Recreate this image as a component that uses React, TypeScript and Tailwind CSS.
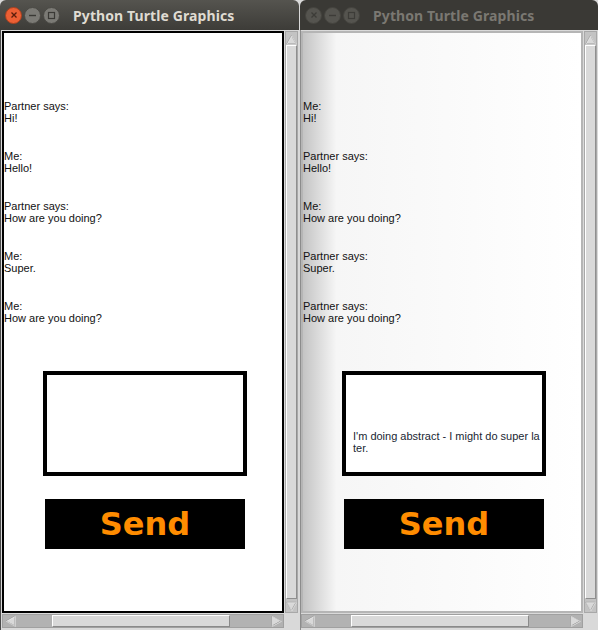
import React from 'react';

type Msg = { who: string; text: string };

const leftChat: Msg[] = [
  { who: 'Partner says:', text: 'Hi!' },
  { who: 'Me:', text: 'Hello!' },
  { who: 'Partner says:', text: 'How are you doing?' },
  { who: 'Me:', text: 'Super.' },
  { who: 'Me:', text: 'How are you doing?' }
];

const rightChat: Msg[] = [
  { who: 'Me:', text: 'Hi!' },
  { who: 'Partner says:', text: 'Hello!' },
  { who: 'Me:', text: 'How are you doing?' },
  { who: 'Partner says:', text: 'Super.' },
  { who: 'Partner says:', text: 'How are you doing?' }
];

function TitleButtons({ active }: { active: boolean }) {
  const grey = active ? 'bg-[#7b7a75] border-[#4a4944]' : 'bg-[#55544f] border-[#45443f]';
  const mark = active ? '#3a3935' : '#3d3c38';
  return (
    <div className="flex items-center gap-[2px] pl-[5px]">
      <div
        className={`w-[17px] h-[17px] rounded-full border flex items-center justify-center ${
          active ? 'bg-[#ec5f34] border-[#a8401f]' : grey
        }`}
      >
        <svg width="8" height="8" viewBox="0 0 8 8">
          <path d="M1.5 1.5 L6.5 6.5 M6.5 1.5 L1.5 6.5" stroke={active ? '#5a1d0b' : mark} strokeWidth="1.3" />
        </svg>
      </div>
      <div className={`w-[17px] h-[17px] rounded-full border flex items-center justify-center ${grey}`}>
        <svg width="9" height="9" viewBox="0 0 9 9">
          <path d="M1 4.5 H8" stroke={mark} strokeWidth="1.4" />
        </svg>
      </div>
      <div className={`w-[17px] h-[17px] rounded-full border flex items-center justify-center ${grey}`}>
        <svg width="9" height="9" viewBox="0 0 9 9">
          <rect x="1.5" y="1.5" width="6" height="6" fill="none" stroke={mark} strokeWidth="1.2" />
        </svg>
      </div>
    </div>
  );
}

function Arrow({ dir }: { dir: 'up' | 'down' | 'left' | 'right' }) {
  const paths: Record<string, string> = {
    up: 'M6 2 L11 11 L1 11 Z',
    down: 'M1 2 L11 2 L6 11 Z',
    left: 'M2 6 L11 1 L11 11 Z',
    right: 'M1 1 L10 6 L1 11 Z'
  };
  return (
    <svg width="12" height="12" viewBox="0 0 12 12">
      <path d={paths[dir]} fill="#d9d9d9" stroke="#9a9a9a" strokeWidth="1" />
      <path d={paths[dir]} fill="none" stroke="#f4f4f4" strokeWidth="0.6" transform="translate(0.4 0.4)" />
    </svg>
  );
}

function VScroll() {
  return (
    <div className="w-[13px] flex flex-col bg-[#c3c3c3] border border-[#a8a8a8]">
      <div className="h-[13px] flex items-center justify-center">
        <Arrow dir="up" />
      </div>
      <div className="flex-1 bg-[#d9d9d9] border-t border-l border-white border-r border-b border-r-[#8f8f8f] border-b-[#8f8f8f]" />
      <div className="h-[13px] flex items-center justify-center">
        <Arrow dir="down" />
      </div>
    </div>
  );
}

function HScroll() {
  return (
    <div className="h-[14px] flex bg-[#b2b2b2] border border-[#a0a0a0]">
      <div className="w-[13px] flex items-center justify-center">
        <Arrow dir="left" />
      </div>
      <div className="flex-1 flex">
        <div className="w-[36px]" />
        <div className="w-[178px] bg-[#d9d9d9] border-t border-l border-white border-r border-b border-r-[#8a8a8a] border-b-[#8a8a8a]" />
      </div>
      <div className="w-[13px] flex items-center justify-center">
        <Arrow dir="right" />
      </div>
    </div>
  );
}

function Canvas({ chat, typed, active }: { chat: Msg[]; typed?: boolean; active: boolean }) {
  return (
    <div
      className={`flex-1 flex flex-col pt-[67px] ${
        active
          ? 'bg-white border-[2px] border-black'
          : 'bg-linear-to-r from-[#c4c4c4] via-[#f6f6f6] via-[12%] to-white border-[2px] border-[#b5b5b5]'
      }`}
    >
      <div className="flex flex-col gap-[26px] text-[11px] leading-[12px] text-[#111] font-['Liberation_Sans',Arial,sans-serif]">
        {chat.map((m, i) => (
          <div key={i} className="flex flex-col">
            <span>{m.who}</span>
            <span>{m.text}</span>
          </div>
        ))}
      </div>
      <div className="ml-[39px] mt-[47px] w-[204px] h-[105px] border-[4px] border-black bg-white pt-[55px] pl-[7px] text-[11px] leading-[12px] text-[#1a1f33] font-['Liberation_Sans',Arial,sans-serif]">
        {typed && (
          <>
            I'm doing abstract - I might do super la
            <br />
            ter.
          </>
        )}
      </div>
      <div className="ml-[41px] mt-[23px] w-[200px] h-[50px] bg-black flex items-center justify-center">
        <span className="text-[32px] leading-none font-bold text-[#ff8c00] font-['DejaVu_Sans',sans-serif] pb-[1px]">
          Send
        </span>
      </div>
    </div>
  );
}

function Window({ active, chat, typed, width }: { active: boolean; chat: Msg[]; typed?: boolean; width: string }) {
  return (
    <div className={`flex flex-col h-[630px] ${width}`}>
      <div
        className={`h-[30px] shrink-0 rounded-t-[6px] flex items-center ${
          active ? 'bg-linear-to-b from-[#55544f] to-[#3d3c38]' : 'bg-[#3a3935]'
        }`}
      >
        <TitleButtons active={active} />
        <span
          className={`ml-[13px] text-[14px] font-bold font-['Noto_Sans',sans-serif] tracking-[0.1px] ${
            active ? 'text-[#dfdbd2]' : 'text-[#7a7872]'
          }`}
        >
          Python Turtle Graphics
        </span>
      </div>
      <div className={`flex-1 flex flex-col bg-[#d9d9d9] border-l ${active ? 'border-[#4a4a4a]' : 'border-[#8c8c8c]'}`}>
        <div className={`flex-1 flex gap-[1px] pt-[1px] pr-[1px] ${active ? 'pl-[1px]' : ''}`}>
          <Canvas chat={chat} typed={typed} active={active} />
          <VScroll />
        </div>
        <div className={`flex pt-[1px] pb-[2px] ${active ? 'pl-[1px]' : ''}`}>
          <div className="flex-1">
            <HScroll />
          </div>
          <div className="w-[15px]" />
        </div>
      </div>
    </div>
  );
}

export default function App() {
  return (
    <div className="flex w-[598px] h-[630px] bg-[#d9d9d9] gap-[1px] overflow-hidden">
      <Window active chat={leftChat} width="w-[299px]" />
      <Window active={false} chat={rightChat} typed width="w-[298px]" />
    </div>
  );
}
